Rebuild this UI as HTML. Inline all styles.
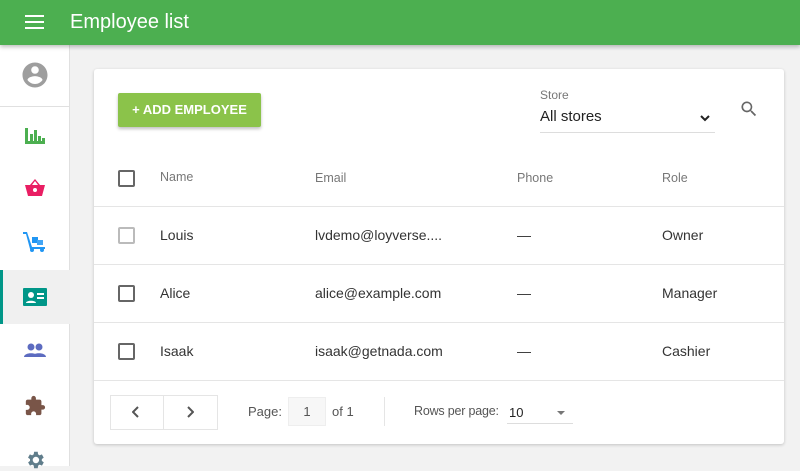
<!DOCTYPE html>
<html><head><style>
*{margin:0;padding:0;box-sizing:border-box}
body{width:800px;height:466px;overflow:hidden;background:#f2f2f2;font-family:"Liberation Sans",sans-serif;position:relative;color:#212121}
.a{position:absolute}
.top{left:0;top:0;width:800px;height:45px;background:#4caf50;box-shadow:0 2px 4px rgba(0,0,0,.25);z-index:2}
.side{left:0;top:45px;width:70px;height:421px;background:#fff;border-right:1px solid #e0e0e0}
.card{left:94px;top:69px;width:690px;height:375px;background:#fff;border-radius:3px;box-shadow:0 1px 3px rgba(0,0,0,.2)}
.line{left:0;width:690px;height:1px;background:#e5e5e5}
.cb{width:17px;height:17px;border:2px solid #666;border-radius:2px}
.t{font-size:14px;color:#333}
.h{font-size:12.5px;color:#777}
</style></head><body>
<div class="a top">
  <div class="a" style="left:25px;top:15px;width:19px;height:2px;background:#fff;box-shadow:0 6px 0 #fff,0 12px 0 #fff"></div>
  <div class="a" style="left:70px;top:11px;font-size:20px;color:#fff">Employee list</div>
</div>
<div class="a side">
  <svg class="a" style="left:20px;top:15px" width="30" height="30" viewBox="0 0 24 24"><path fill="#9e9e9e" d="M12 2C6.5 2 2 6.5 2 12s4.5 10 10 10 10-4.5 10-10S17.5 2 12 2zm0 3c1.7 0 3 1.3 3 3s-1.3 3-3 3-3-1.3-3-3 1.3-3 3-3zm0 14.2c-2.5 0-4.7-1.3-6-3.2 0-2 4-3.1 6-3.1s6 1.1 6 3.1c-1.3 1.9-3.5 3.2-6 3.2z"/></svg>
  <div class="a" style="left:0;top:61px;width:70px;height:1px;background:#e0e0e0"></div>
  <svg class="a" style="left:25px;top:81px" width="20" height="18" viewBox="0 0 20 18"><path fill="#4caf50" d="M0 2h3v16H0zM5 8h3v8H5zM9 4h3v12H9zM13 10h3v6h-3zM17 12h3v4h-3zM0 15h20v3H0z"/></svg>
  <svg class="a" style="left:24px;top:133px" width="22" height="20" viewBox="0 0 22 20"><path fill="#e91e63" d="M1 7h20l-3 11H4zM6 7l5-6 5 6h-2l-3-4-3 4z"/><circle cx="11" cy="12" r="2" fill="#fff"/></svg>
  <svg class="a" style="left:23px;top:186px" width="24" height="22" viewBox="0 0 24 22"><path fill="#2196f3" d="M0 1h4l5 15h13v2H7L3 3H0z"/><rect x="9" y="6" width="6" height="6" fill="#2196f3"/><rect x="14" y="9" width="6" height="5" fill="#42a5f5"/><circle cx="9" cy="19" r="2" fill="#2196f3"/><circle cx="19" cy="19" r="2" fill="#2196f3"/></svg>
  <div class="a" style="left:0;top:225px;width:70px;height:54px;background:#f0f0f0;border-left:3px solid #009688"></div>
  <svg class="a" style="left:23px;top:243px" width="24" height="18" viewBox="0 0 24 18"><rect width="24" height="18" rx="1" fill="#009688"/><circle cx="8" cy="7" r="3" fill="#fff"/><path fill="#fff" d="M3 15c0-3 10-3 10 0zM14 5h7v2h-7zM14 9h7v2h-7z"/></svg>
  <svg class="a" style="left:24px;top:298px" width="22" height="14" viewBox="0 0 22 14"><circle cx="7" cy="4" r="3.5" fill="#5c6bc0"/><circle cx="15" cy="4" r="3.5" fill="#5c6bc0"/><path fill="#5c6bc0" d="M0 14c0-5 14-5 14 0zM8 14c0-5 14-5 14 0z"/></svg>
  <svg class="a" style="left:24px;top:350px" width="22" height="22" viewBox="0 0 24 24"><path fill="#795548" d="M20.5 11H19V7c0-1.1-.9-2-2-2h-4V3.5a2.5 2.5 0 0 0-5 0V5H4c-1.1 0-2 .9-2 2v3.8h1.5c1.5 0 2.7 1.2 2.7 2.7S5 16.2 3.5 16.2H2V20c0 1.1.9 2 2 2h3.8v-1.5c0-1.5 1.2-2.7 2.7-2.7s2.7 1.2 2.7 2.7V22H17c1.1 0 2-.9 2-2v-4h1.5a2.5 2.5 0 0 0 0-5z"/></svg>
  <svg class="a" style="left:24px;top:404px" width="22" height="22" viewBox="0 0 24 24"><path fill="#607d8b" d="M19.4 13c.04-.3.06-.6.06-1s-.02-.7-.06-1l2.1-1.6-2-3.5-2.5 1a7 7 0 0 0-1.7-1L15 3h-4l-.4 2.9a7 7 0 0 0-1.7 1l-2.5-1-2 3.5L6.6 11a7 7 0 0 0 0 2l-2.1 1.6 2 3.5 2.5-1a7 7 0 0 0 1.7 1L11 21h4l.4-2.9a7 7 0 0 0 1.7-1l2.5 1 2-3.5zM13 15.5a3.5 3.5 0 1 1 0-7 3.5 3.5 0 0 1 0 7z"/></svg>
</div>
<div class="a card">
  <div class="a" style="left:24px;top:24px;width:143px;height:34px;background:#8bc34a;border-radius:2px;box-shadow:0 2px 3px rgba(0,0,0,.25);color:#fff;font-size:13px;font-weight:bold;text-align:center;line-height:34px">+ ADD EMPLOYEE</div>
  <div class="a" style="left:446px;top:19px;font-size:12px;color:#777">Store</div>
  <div class="a" style="left:446px;top:39px;font-size:15px;color:#222">All stores</div>
  <div class="a" style="left:446px;top:63px;width:175px;height:1px;background:#ddd"></div>
  <svg class="a" style="left:605px;top:46px" width="12" height="8" viewBox="0 0 12 8"><path d="M2 1l4 4 4-4" stroke="#222" stroke-width="2" fill="none"/></svg>
  <svg class="a" style="left:645px;top:30px" width="20" height="20" viewBox="0 0 24 24"><path fill="#666" d="M15.5 14h-.8l-.3-.3A6.5 6.5 0 1 0 9.5 16a6.5 6.5 0 0 0 4.2-1.6l.3.3v.8l5 5 1.5-1.5zm-6 0C7 14 5 12 5 9.5S7 5 9.5 5 14 7 14 9.5 12 14 9.5 14z"/></svg>
  <div class="a cb" style="left:24px;top:101px"></div>
  <div class="a h" style="left:66px;top:101px">Name</div>
  <div class="a h" style="left:221px;top:102px">Email</div>
  <div class="a h" style="left:423px;top:102px">Phone</div>
  <div class="a h" style="left:568px;top:102px">Role</div>
  <div class="a line" style="top:137px"></div>
  <div class="a cb" style="left:24px;top:158px;border-color:#bbb"></div>
  <div class="a t" style="left:66px;top:158px">Louis</div>
  <div class="a t" style="left:221px;top:158px">lvdemo@loyverse....</div>
  <div class="a t" style="left:423px;top:158px">—</div>
  <div class="a t" style="left:568px;top:158px">Owner</div>
  <div class="a line" style="top:195px"></div>
  <div class="a cb" style="left:24px;top:216px"></div>
  <div class="a t" style="left:66px;top:216px">Alice</div>
  <div class="a t" style="left:221px;top:216px">alice@example.com</div>
  <div class="a t" style="left:423px;top:216px">—</div>
  <div class="a t" style="left:568px;top:216px">Manager</div>
  <div class="a line" style="top:253px"></div>
  <div class="a cb" style="left:24px;top:274px"></div>
  <div class="a t" style="left:66px;top:274px">Isaak</div>
  <div class="a t" style="left:221px;top:274px">isaak@getnada.com</div>
  <div class="a t" style="left:423px;top:274px">—</div>
  <div class="a t" style="left:568px;top:274px">Cashier</div>
  <div class="a line" style="top:311px"></div>
  <div class="a" style="left:16px;top:326px;width:108px;height:35px;border:1px solid #e5e5e5"></div>
  <div class="a" style="left:69px;top:326px;width:1px;height:35px;background:#e5e5e5"></div>
  <svg class="a" style="left:38px;top:337px" width="8" height="12" viewBox="0 0 8 12"><path d="M6 1L1 6l5 5" stroke="#555" stroke-width="2" fill="none"/></svg>
  <svg class="a" style="left:92px;top:337px" width="8" height="12" viewBox="0 0 8 12"><path d="M2 1l5 5-5 5" stroke="#555" stroke-width="2" fill="none"/></svg>
  <div class="a" style="left:154px;top:335px;font-size:13px;color:#555">Page:</div>
  <div class="a" style="left:194px;top:328px;width:38px;height:29px;background:#f7f7f7;border:1px solid #eee;font-size:13px;color:#555;text-align:center;line-height:27px">1</div>
  <div class="a" style="left:238px;top:335px;font-size:13px;color:#555">of 1</div>
  <div class="a" style="left:290px;top:328px;width:1px;height:29px;background:#e5e5e5"></div>
  <div class="a" style="left:320px;top:335px;font-size:12.5px;color:#555;letter-spacing:-0.2px">Rows per page:</div>
  <div class="a" style="left:415px;top:336px;font-size:13px;color:#222">10</div>
  <div class="a" style="left:413px;top:354px;width:66px;height:1px;background:#ddd"></div>
  <div class="a" style="left:463px;top:342px;border:4px solid transparent;border-top:4px solid #777;border-bottom:0"></div>
</div>
</body></html>
